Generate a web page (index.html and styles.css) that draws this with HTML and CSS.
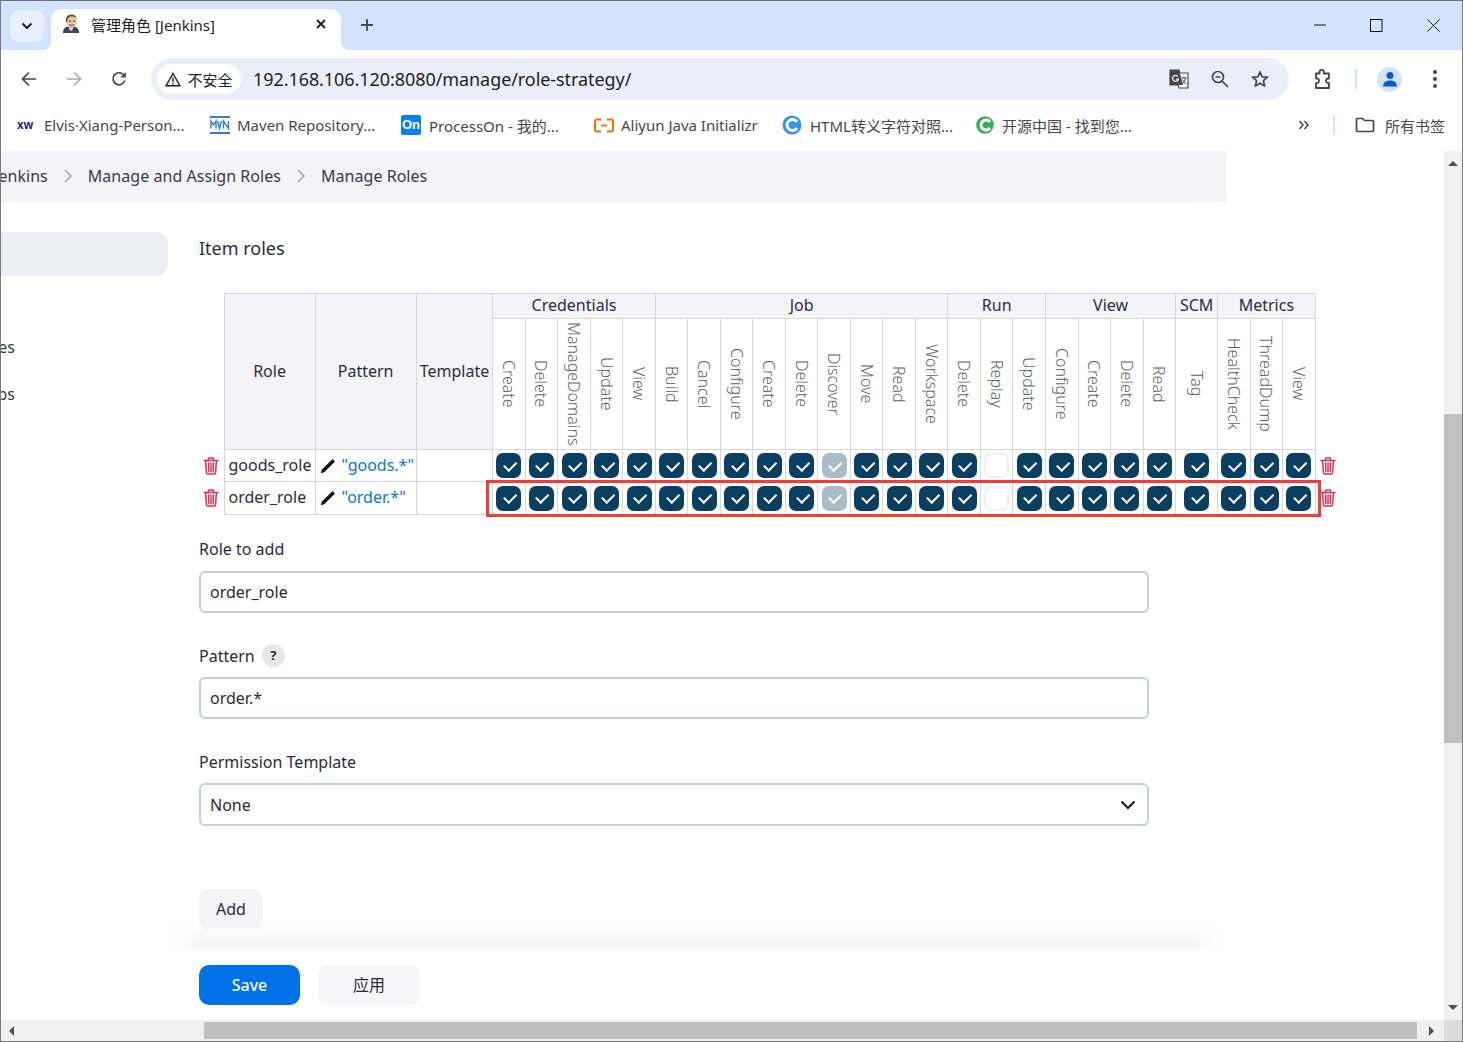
FILE: index.html
```html
<!DOCTYPE html>
<html lang="zh-CN">
<head>
<meta charset="utf-8">
<title>管理角色 [Jenkins]</title>
<link rel="stylesheet" href="styles.css">
</head>
<body>
<svg class="sprite" width="0" height="0" aria-hidden="true">
  <symbol id="trash" viewBox="0 0 16 18">
    <path d="M1 3.6h14M5.4 3.3V2a1 1 0 0 1 1-1h3.2a1 1 0 0 1 1 1v1.3M2.6 3.8l.8 12a1.3 1.3 0 0 0 1.3 1.2h6.6a1.3 1.3 0 0 0 1.3-1.2l.8-12M5.6 6l.3 8.6M8 6v8.6M10.4 6l-.3 8.6" fill="none" stroke="currentColor" stroke-width="1.5" stroke-linecap="round"/>
  </symbol>
  <symbol id="pencil" viewBox="0 0 16 16">
    <path d="M.8 15.200l.9-3.400L11.800 1.700a1 1 0 0 1 1.400 0l1.100 1.100a1 1 0 0 1 0 1.400L4.200 14.300z" fill="currentColor"/>
  </symbol>
  <symbol id="chev" viewBox="0 0 8 14">
    <path d="M1 1l6 6-6 6" fill="none" stroke="currentColor" stroke-width="1.500"/>
  </symbol>
</svg>
<div class="tabstrip">
  <button class="tab-search"><svg width="12" height="8" viewBox="0 0 12 8"><path d="M1.500 1.500L6 6l4.500-4.500" fill="none" stroke="#1f1f1f" stroke-width="2"/></svg></button>
  <div class="tab">
    <svg class="favicon" width="18" height="20" viewBox="0 0 18 20">
      <path d="M1 19c0-4 2-6 5-6.500h6c3 .5 5 2.500 5 6.500z" fill="#35495c"/>
      <path d="M7 13l2 1.500 2-1.500v2l-2 2-2-2z" fill="#fff"/>
      <path d="M6.500 15l2.500 1-2.500 1.200zM11.500 15L9 16l2.500 1.200z" fill="#d33833"/>
      <path d="M4 6c0-3.500 2.500-5.500 5.500-5.500S15 2.800 15 6.500c0 3-1 7-5 7.300-3.500.2-5-2.300-5.500-4.300C4 9 4 7 4 6z" fill="#eec9a8"/>
      <path d="M4 8C3 4 5.500.5 9.500.5c2.500 0 4.500 1.500 5 4-2-2-5-2.500-7-1.500-1.500.8-2 2.500-2.300 5z" fill="#5b5048"/>
      <path d="M7 10.500c1.500 1 3.500 1 5 0" fill="none" stroke="#6b3c2c" stroke-width="1"/>
      <circle cx="8" cy="7" r=".8" fill="#222"/><circle cx="12" cy="7" r=".8" fill="#222"/>
    </svg>
    <span class="tab-title">管理角色 [Jenkins]</span>
    <svg class="tab-close" width="10" height="10" viewBox="0 0 10 10"><path d="M1 1l8 8M9 1L1 9" stroke="#1f1f1f" stroke-width="1.800"/></svg>
  </div>
  <svg class="new-tab" width="14" height="14" viewBox="0 0 14 14"><path d="M7 1v12M1 7h12" stroke="#474747" stroke-width="1.800"/></svg>
  <div class="win-controls">
    <svg width="12" height="12" viewBox="0 0 12 12"><path d="M0 6h12" stroke="#111" stroke-width="1"/></svg>
    <svg width="13" height="13" viewBox="0 0 13 13"><rect x=".5" y=".5" width="11.500" height="12" fill="none" stroke="#111"/></svg>
    <svg width="13" height="13" viewBox="0 0 13 13"><path d="M.5.500l12 12M12.500.500l-12 12" stroke="#111" stroke-width="1"/></svg>
  </div>
</div>
<div class="toolbar">
  <svg class="nav" width="16" height="16" viewBox="0 0 16 16"><path d="M15 8H2M8 1.500L1.500 8 8 14.500" fill="none" stroke="#474747" stroke-width="1.700"/></svg>
  <svg class="nav" width="16" height="16" viewBox="0 0 16 16"><path d="M1 8h13M8 1.500L14.500 8 8 14.500" fill="none" stroke="#a9acb0" stroke-width="1.700"/></svg>
  <svg class="nav" width="16" height="16" viewBox="0 0 16 16"><path d="M13.800 9.500A6 6 0 1 1 12.300 3.500L14 5.200" fill="none" stroke="#474747" stroke-width="1.700"/><path d="M14.800 1v5.500H9.300z" fill="#474747"/></svg>
  <div class="omnibox">
    <div class="chip">
      <svg width="16" height="15" viewBox="0 0 16 15"><path d="M8 1.500L15 13.800H1zM8 5.500v4.500M8 11v1.500" fill="none" stroke="#1f1f1f" stroke-width="1.400"/></svg>
      <span>不安全</span>
    </div>
    <span class="url">192.168.106.120:8080/manage/role-strategy/</span>
    <div class="omni-actions">
      <svg width="20" height="20" viewBox="0 0 20 20"><path d="M1 1h9l1 3h8v15h-9l-1-3H1z" fill="#fff" stroke="#474747" stroke-width="1.200"/><path d="M1 1h9l4 15H1z" fill="#474747"/><path d="M9 7.500a3 3 0 1 0 .5 2.500H6.800" fill="none" stroke="#fff" stroke-width="1.200"/><path d="M12.500 9h5M15 7.500V9M13 15c2-1 3-3 3.500-6M13.500 10.500c.8 2 2 3.500 4 4.500" fill="none" stroke="#474747" stroke-width="1"/></svg>
      <svg width="18" height="18" viewBox="0 0 18 18"><circle cx="7" cy="7" r="5.500" fill="none" stroke="#474747" stroke-width="1.700"/><path d="M11 11l6 6M4.500 7h5" fill="none" stroke="#474747" stroke-width="1.700"/></svg>
      <svg width="18" height="18" viewBox="0 0 18 18"><path d="M9 1.800l2.100 5 5.400.4-4.100 3.500 1.300 5.300L9 13.200 4.300 16l1.300-5.300L1.500 7.200l5.400-.4z" fill="none" stroke="#474747" stroke-width="1.700" stroke-linejoin="round"/></svg>
    </div>
  </div>
  <svg class="ext" width="20" height="21" viewBox="0 0 20 21"><path d="M3 4.500h3.500V3a2.200 2.200 0 0 1 4.400 0v1.500h5v5.200c-1.600-.6-3 .5-3 2s1.400 2.600 3 2v5.300H3v-5c1.900.6 3-.8 3-2.200S4.900 9 3 9.600z" fill="none" stroke="#474747" stroke-width="1.800" stroke-linejoin="round"/></svg>
  <i class="tool-sep"></i>
  <div class="avatar"><svg width="16" height="16" viewBox="0 0 16 16"><circle cx="8" cy="4.500" r="3.500" fill="#0b57d0"/><path d="M1 15.500c0-4 3-6 7-6s7 2 7 6z" fill="#0b57d0"/></svg></div>
  <div class="kebab"><i></i><i></i><i></i></div>
</div>
<div class="bookmarks">
  <span class="bm bm-1"><b class="ic-xw">xw</b>Elvis·Xiang-Person...</span>
  <span class="bm bm-2"><svg width="20" height="18" viewBox="0 0 20 18"><rect width="20" height="2" fill="#2d7fd3"/><rect y="16" width="20" height="2" fill="#2d7fd3"/><path d="M1 12.500V5l2.500 4L6 5v7.500M7.500 5l2 7.500L11.500 5M13.500 12.500V5l5 7.500V5" fill="none" stroke="#2d7fd3" stroke-width="1.400"/></svg>Maven Repository...</span>
  <span class="bm bm-3"><b class="ic-on">On</b>ProcessOn - 我的...</span>
  <span class="bm bm-4"><svg width="20" height="15" viewBox="0 0 20 15"><path d="M7 1.500H3A2 2 0 0 0 1 3.500v8a2 2 0 0 0 2 2h4M13 1.500h4a2 2 0 0 1 2 2v8a2 2 0 0 1-2 2h-4" fill="none" stroke="#ff6a00" stroke-width="2"/><path d="M7 7.500h6" stroke="#ff6a00" stroke-width="1.800"/></svg>Aliyun Java Initializr</span>
  <span class="bm bm-5"><svg width="20" height="20" viewBox="0 0 20 20"><circle cx="10" cy="10" r="9.500" fill="#2f95ee"/><path d="M15 6.800A5.500 5.500 0 1 0 15 13.200" fill="none" stroke="#fff" stroke-width="3"/></svg>HTML转义字符对照...</span>
  <span class="bm bm-6"><svg width="18" height="20" viewBox="0 0 18 20"><circle cx="9" cy="10" r="8.800" fill="#3aad5a"/><path d="M14 7A5 5 0 1 0 14 13" fill="none" stroke="#fff" stroke-width="3"/></svg>开源中国 - 找到您...</span>
  <div class="bm-end">
    <svg width="12" height="10" viewBox="0 0 12 10"><path d="M1.500 1L5 5 1.500 9M6.500 1L10 5 6.500 9" fill="none" stroke="#474747" stroke-width="1.500"/></svg>
    <i class="bm-sep"></i>
    <span class="bm bm-all"><svg width="20" height="16" viewBox="0 0 20 16"><path d="M1.500 2.500a1 1 0 0 1 1-1h5l2 2h8a1 1 0 0 1 1 1v9a1 1 0 0 1-1 1h-15a1 1 0 0 1-1-1z" fill="none" stroke="#474747" stroke-width="1.700"/></svg>所有书签</span>
  </div>
</div>
<div class="viewport">
  <div class="view-col">
    <main class="page">
      <nav class="breadcrumb">
        <span class="crumb crumb-first">Jenkins</span><svg class="sep" width="8" height="14"><use href="#chev"/></svg>
        <span class="crumb">Manage and Assign Roles</span><svg class="sep" width="8" height="14"><use href="#chev"/></svg>
        <span class="crumb">Manage Roles</span>
      </nav>
      <div class="columns">
        <aside class="side">
          <div class="side-active"></div>
          <div class="side-link side-link-1"><span>Manage Roles</span></div>
          <div class="side-link side-link-2"><span>Role Groups</span></div>
        </aside>
        <section class="content">
          <h2 class="heading">Item roles</h2>
          <div class="table-wrap">
            <table class="roles">
              <colgroup>
                <col class="w-act"><col class="w-role"><col class="w-pat"><col class="w-tpl">
                <col class="p"><col class="p"><col class="p"><col class="p"><col class="p">
                <col class="p"><col class="p"><col class="p"><col class="p"><col class="p"><col class="p"><col class="p"><col class="p"><col class="p">
                <col class="p"><col class="p"><col class="p">
                <col class="p"><col class="p"><col class="p"><col class="p">
                <col class="w-tag">
                <col class="p"><col class="p"><col class="p">
                <col class="w-act">
              </colgroup>
              <thead>
                <tr class="r-group">
                  <td class="none" rowspan="2"></td>
                  <th class="gray" rowspan="2">Role</th>
                  <th class="gray" rowspan="2">Pattern</th>
                  <th class="gray" rowspan="2">Template</th>
                  <th class="gray" colspan="5">Credentials</th>
                  <th class="gray" colspan="9">Job</th>
                  <th class="gray" colspan="3">Run</th>
                  <th class="gray" colspan="4">View</th>
                  <th class="gray">SCM</th>
                  <th class="gray" colspan="3">Metrics</th>
                  <td class="none" rowspan="2"></td>
                </tr>
                <tr class="r-perm">
                  <th><span>Create</span></th><th><span>Delete</span></th><th><span>ManageDomains</span></th><th><span>Update</span></th><th><span>View</span></th>
                  <th><span>Build</span></th><th><span>Cancel</span></th><th><span>Configure</span></th><th><span>Create</span></th><th><span>Delete</span></th><th><span>Discover</span></th><th><span>Move</span></th><th><span>Read</span></th><th><span>Workspace</span></th>
                  <th><span>Delete</span></th><th><span>Replay</span></th><th><span>Update</span></th>
                  <th><span>Configure</span></th><th><span>Create</span></th><th><span>Delete</span></th><th><span>Read</span></th>
                  <th><span>Tag</span></th>
                  <th><span>HealthCheck</span></th><th><span>ThreadDump</span></th><th><span>View</span></th>
                </tr>
              </thead>
              <tbody>
                <tr class="r-1">
                  <td class="none act"><svg class="trash" width="16" height="18"><use href="#trash"/></svg></td>
                  <td class="name">goods_role</td>
                  <td class="pat"><svg class="pencil" width="16" height="16"><use href="#pencil"/></svg><a class="regex">"goods.*"</a></td>
                  <td></td>
                  <td><i class="cb on"></i></td><td><i class="cb on"></i></td><td><i class="cb on"></i></td><td><i class="cb on"></i></td><td><i class="cb on"></i></td>
                  <td><i class="cb on"></i></td><td><i class="cb on"></i></td><td><i class="cb on"></i></td><td><i class="cb on"></i></td><td><i class="cb on"></i></td><td><i class="cb dis"></i></td><td><i class="cb on"></i></td><td><i class="cb on"></i></td><td><i class="cb on"></i></td>
                  <td><i class="cb on"></i></td><td><i class="cb off"></i></td><td><i class="cb on"></i></td>
                  <td><i class="cb on"></i></td><td><i class="cb on"></i></td><td><i class="cb on"></i></td><td><i class="cb on"></i></td>
                  <td><i class="cb on"></i></td>
                  <td><i class="cb on"></i></td><td><i class="cb on"></i></td><td><i class="cb on"></i></td>
                  <td class="none act"><svg class="trash" width="16" height="18"><use href="#trash"/></svg></td>
                </tr>
                <tr class="r-2">
                  <td class="none act"><svg class="trash" width="16" height="18"><use href="#trash"/></svg></td>
                  <td class="name">order_role</td>
                  <td class="pat"><svg class="pencil" width="16" height="16"><use href="#pencil"/></svg><a class="regex">"order.*"</a></td>
                  <td></td>
                  <td><i class="cb on"></i></td><td><i class="cb on"></i></td><td><i class="cb on"></i></td><td><i class="cb on"></i></td><td><i class="cb on"></i></td>
                  <td><i class="cb on"></i></td><td><i class="cb on"></i></td><td><i class="cb on"></i></td><td><i class="cb on"></i></td><td><i class="cb on"></i></td><td><i class="cb dis"></i></td><td><i class="cb on"></i></td><td><i class="cb on"></i></td><td><i class="cb on"></i></td>
                  <td><i class="cb on"></i></td><td><i class="cb off"></i></td><td><i class="cb on"></i></td>
                  <td><i class="cb on"></i></td><td><i class="cb on"></i></td><td><i class="cb on"></i></td><td><i class="cb on"></i></td>
                  <td><i class="cb on"></i></td>
                  <td><i class="cb on"></i></td><td><i class="cb on"></i></td><td><i class="cb on"></i></td>
                  <td class="none act"><svg class="trash" width="16" height="18"><use href="#trash"/></svg></td>
                </tr>
              </tbody>
            </table>
            <div class="highlight"></div>
          </div>
          <div class="field field-first">
            <div class="label">Role to add</div>
            <div class="input">order_role</div>
          </div>
          <div class="field field-second">
            <div class="label">Pattern <span class="help">?</span></div>
            <div class="input">order.*</div>
          </div>
          <div class="field">
            <div class="label">Permission Template</div>
            <div class="input select">None<svg width="16" height="10" viewBox="0 0 16 10"><path d="M1.500 1.500L8 8l6.500-6.500" fill="none" stroke="#14141f" stroke-width="2"/></svg></div>
          </div>
          <button class="btn btn-add">Add</button>
          <div class="save-bar">
            <button class="btn btn-save">Save</button>
            <button class="btn btn-apply">应用</button>
          </div>
        </section>
      </div>
    </main>
    <div class="hscroll">
      <span class="arrow-left"></span>
      <span class="hthumb"></span>
      <span class="arrow-right"></span>
    </div>
  </div>
  <div class="vscroll">
    <span class="arrow-up"></span>
    <span class="vthumb"></span>
    <span class="arrow-down"></span>
    <span class="corner"></span>
  </div>
</div>
</body>
</html>
```
FILE: styles.css
```css
* { box-sizing: border-box; }
html, body { margin: 0; padding: 0; }
body {
  width: 1463px;
  height: 1042px;
  overflow: hidden;
  display: flex;
  flex-direction: column;
  background: #fff;
  border-top: 1px solid #6b6f76;
  border-left: 1px solid #7a7a7a;
  border-right: 1px solid #7a7a7a;
  border-bottom: 1px solid #7a7a7a;
  font-family: "Noto Sans", "Noto Sans CJK SC", sans-serif;
  color: #14141f;
}
.sprite { position: absolute; }

/* browser chrome */
.tabstrip {
  height: 49px;
  flex: none;
  display: flex;
  background: #d3e3fd;
  position: relative;
}
.tab-search {
  width: 34px;
  height: 32px;
  margin: 9px 0 0 9px;
  border: 0;
  border-radius: 9px;
  background: #e9f0fd;
  display: flex;
  align-items: center;
  justify-content: center;
  padding: 0;
}
.tab {
  width: 290px;
  height: 41px;
  margin: 8px 0 0 7px;
  padding: 0 15px 11px 11px;
  background: #fff;
  border-radius: 10px 10px 0 0;
  display: flex;
  align-items: center;
  font-size: 15px;
  color: #1f1f1f;
  position: relative;
}
.tab::before, .tab::after {
  content: "";
  position: absolute;
  bottom: 0;
  width: 8px;
  height: 8px;
}
.tab::before { left: -8px; background: radial-gradient(circle at 0 0, transparent 7.500px, #fff 8px); }
.tab::after { right: -8px; background: radial-gradient(circle at 100% 0, transparent 7.500px, #fff 8px); }
.favicon { flex: none; }
.tab-title { margin-left: 11px; flex: 1; white-space: nowrap; }
.new-tab { margin: 17px 0 0 19px; }
.win-controls {
  margin-left: auto;
  margin-right: 22px;
  display: flex;
  align-items: center;
  gap: 44px;
  height: 48px;
}
.toolbar {
  height: 56px;
  flex: none;
  background: #fff;
  border-radius: 8px 8px 0 0;
  display: flex;
  align-items: center;
  padding: 2px 0 0 20px;
  position: relative;
}
.nav { margin-right: 29px; flex: none; }
.nav:nth-of-type(3) { margin-right: 24px; }
.omnibox {
  width: 1138px;
  height: 42px;
  border-radius: 21px;
  background: #e9eef8;
  display: flex;
  align-items: center;
  padding-left: 6px;
}
.chip {
  height: 30px;
  width: 84px;
  background: #fff;
  border-radius: 15px;
  display: flex;
  align-items: center;
  justify-content: center;
  gap: 6px;
  font-size: 15px;
  color: #1f1f1f;
  flex: none;
}
.url { margin-left: 12px; font-size: 18px; letter-spacing: -.07px; color: #1f1f1f; white-space: nowrap; }
.omni-actions {
  margin-left: auto;
  margin-right: 20px;
  display: flex;
  align-items: center;
  gap: 22px;
}
.ext { margin-left: 24px; flex: none; }
.tool-sep { width: 2px; height: 20px; background: #d3e3fd; margin-left: 22px; }
.avatar {
  width: 25px;
  height: 25px;
  margin-left: 20px;
  border-radius: 50%;
  background: #d3e3fd;
  display: flex;
  align-items: center;
  justify-content: center;
}
.kebab { margin-left: 31px; display: flex; flex-direction: column; gap: 3px; }
.kebab i { width: 4px; height: 4px; border-radius: 50%; background: #474747; }
.bookmarks {
  height: 45px;
  flex: none;
  display: flex;
  align-items: center;
  background: #fff;
  font-size: 15px;
  color: #474747;
  padding: 0 0 7px 16px;
  white-space: nowrap;
}
.bm { display: flex; align-items: center; gap: 8px; }
.bm-1 { width: 193px; }
.bm-2 { width: 191px; gap: 7px; }
.bm-3 { width: 193px; }
.bm-4 { width: 188px; gap: 7px; }
.bm-5 { width: 194px; }
.bm-6 { gap: 8px; }
.ic-xw { font-size: 12px; color: #14147a; font-weight: 700; font-family: "Liberation Sans", sans-serif; width: 19px; }
.ic-on {
  width: 20px;
  height: 20px;
  border-radius: 2px;
  background: #0a7ff0;
  color: #fff;
  font-size: 13px;
  font-weight: 700;
  line-height: 20px;
  text-align: center;
  font-family: "Liberation Sans", sans-serif;
}
.bm-end { margin-left: auto; margin-right: 17px; display: flex; align-items: center; }
.bm-sep { width: 2px; height: 20px; background: #d3e3fd; margin: 0 20px 0 23px; }
.bm-all { gap: 10px; }

/* viewport */
.viewport { flex: 1; min-height: 0; display: flex; }
.view-col { width: 1443px; display: flex; flex-direction: column; }
.page { flex: 1; min-height: 0; overflow: hidden; background: #fff; }
.hscroll {
  height: 21px;
  flex: none;
  background: #f0f0f0;
  display: flex;
  align-items: center;
  position: relative;
}
.hthumb { width: 1213px; height: 17px; margin-left: 203px; background: #bfbfbf; }
.arrow-left, .arrow-right, .arrow-up, .arrow-down { position: absolute; width: 0; height: 0; border: 5px solid transparent; }
.arrow-left { left: 3px; top: 6px; border-right-color: #505050; }
.arrow-right { right: 5px; top: 6px; border-left-color: #505050; }
.vscroll { width: 18px; flex: none; background: #f0f0f0; position: relative; }
.arrow-up { left: 4px; top: 5px; border-bottom-color: #505050; }
.arrow-down { left: 4px; bottom: 26px; border-top-color: #505050; }
.vthumb { position: absolute; left: 0; right: 0; top: 263px; height: 329px; background: #c0c0c0; }
.corner { position: absolute; left: 0; right: 0; bottom: 0; height: 21px; background: #dcdcdc; }

/* jenkins page */
.breadcrumb {
  width: 1225px;
  height: 51px;
  padding-bottom: 2px;
  background: #f4f4f8;
  display: flex;
  align-items: center;
  font-size: 16px;
  letter-spacing: .04px;
  color: #3a3a46;
  white-space: nowrap;
  position: relative;
}
.breadcrumb::after {
  content: "";
  position: absolute;
  left: 198px;
  width: 996px;
  top: 51px;
  height: 1px;
  background: #f7f7fa;
}
.crumb-first { margin-left: -7px; }
.sep { color: #a3a3b2; margin: 0 16px; flex: none; }
.columns { display: flex; }
.side { width: 167px; margin-right: 31px; padding-top: 30px; flex: none; }
.side-active { height: 44px; background: #edeef3; border-radius: 0 12px 12px 0; }
.side-link { width: 14px; display: flex; justify-content: flex-end; font-size: 16px; white-space: nowrap; color: #3a3a46; line-height: 22px; }
.side-link-1 { margin-top: 60px; }
.side-link-2 { margin-top: 25px; }
.content { flex: 1; min-width: 0; padding-top: 30px; }
.heading { margin: 0 0 29px; font-size: 18px; font-weight: 400; line-height: 32px; color: #2b2b36; }
.table-wrap { position: relative; width: 1142px; }
.roles { border-collapse: collapse; table-layout: fixed; width: 1141.500px; font-size: 16px; }
.w-act { width: 25px; }
.w-role { width: 91px; }
.w-pat { width: 101px; }
.w-tpl { width: 76.500px; }
.p { width: 32.500px; }
.w-tag { width: 42px; }
.roles th, .roles td { border: 1px solid #d7d7d4; padding: 0; font-weight: 400; text-align: center; color: #2e2e38; }
.roles .none { border: 0; }
.roles .gray { background: #f3f3f8; white-space: nowrap; padding-bottom: 2px; }
.r-group { height: 25px; }
.r-perm { height: 131px; }
.r-perm th span {
  writing-mode: vertical-rl;
  display: inline-block;
  vertical-align: middle;
  white-space: nowrap;
  font-size: 16px;
  line-height: 20px;
  color: #5f5f69;
  font-weight: 300;
}
.r-1 { height: 32px; }
.r-2 { height: 33px; }
.roles .name { text-align: left; padding: 0 0 2px 4px; white-space: nowrap; }
.roles .pat { text-align: left; padding: 0 0 2px 4px; white-space: nowrap; }
.pencil { color: #14141f; vertical-align: -3px; margin-right: 6px; }
.regex { color: #0b74e5; }
.trash { color: #e62d4e; display: block; margin: 0 auto; }
.act .trash { margin-left: 4px; }
.cb {
  display: block;
  width: 25px;
  height: 25px;
  margin: 0 auto;
  border-radius: 7px;
  position: relative;
}
.cb::after {
  content: "";
  position: absolute;
  left: 7.500px;
  top: 7.500px;
  width: 10px;
  height: 5.500px;
  border-left: 2px solid #fff;
  border-bottom: 2px solid #fff;
  transform: rotate(-45deg);
}
.on { background: #0b3f62; }
.dis { background: #a9bcc8; }
.off { background: #fff; border: 2px solid #eef0f3; }
.off::after { display: none; }
.highlight {
  position: absolute;
  left: 287px;
  top: 187px;
  width: 835px;
  height: 37px;
  border: 3px solid #f53a3a;
  pointer-events: none;
}
.field { width: 950px; margin-top: 32px; }
.field-first { margin-top: 23px; }
.field-second { margin-top: 31px; }
.label { font-size: 16px; line-height: 22px; color: #2b2b36; margin-bottom: 10px; display: flex; align-items: center; gap: 7px; }
.field-first .label { margin-bottom: 11px; }
.help {
  width: 23px;
  height: 23px;
  border-radius: 50%;
  background: #e7e7e7;
  font-size: 13px;
  font-weight: 700;
  text-align: center;
  line-height: 23px;
  color: #2b2b36;
}
.input {
  height: 42px;
  border: 2px solid #c5d0d6;
  border-radius: 6px;
  padding: 0 9px;
  font-size: 16px;
  line-height: 38px;
  color: #2b2b36;
  background: #fff;
}
.select { height: 43px; display: flex; align-items: center; justify-content: space-between; padding-right: 11px; }
.btn {
  border: 0;
  font: inherit;
  font-size: 16px;
  border-radius: 10px;
  padding: 0 0 2px;
  cursor: pointer;
}
.btn-add { width: 64px; height: 41px; margin-top: 63px; background: #f5f5f8; color: #2b2b36; display: block; position: relative; z-index: 1; }
.save-bar { display: flex; gap: 18px; padding-top: 35px; position: relative; }
.save-bar::before {
  content: "";
  position: absolute;
  left: -29px;
  width: 1050px;
  top: -10px;
  height: 29px;
  background: linear-gradient(to bottom, rgba(244,244,246,0), #f5f5f6);
  -webkit-mask-image: linear-gradient(to right, transparent, #000 30px, #000 1020px, transparent);
  mask-image: linear-gradient(to right, transparent, #000 30px, #000 1020px, transparent);
}
.btn-save { width: 101px; height: 40px; background: #0071e6; color: #fff; font-weight: 500; padding: 0; }
.btn-apply { width: 102px; height: 40px; background: #f6f6f9; color: #2b2b36; }
```
